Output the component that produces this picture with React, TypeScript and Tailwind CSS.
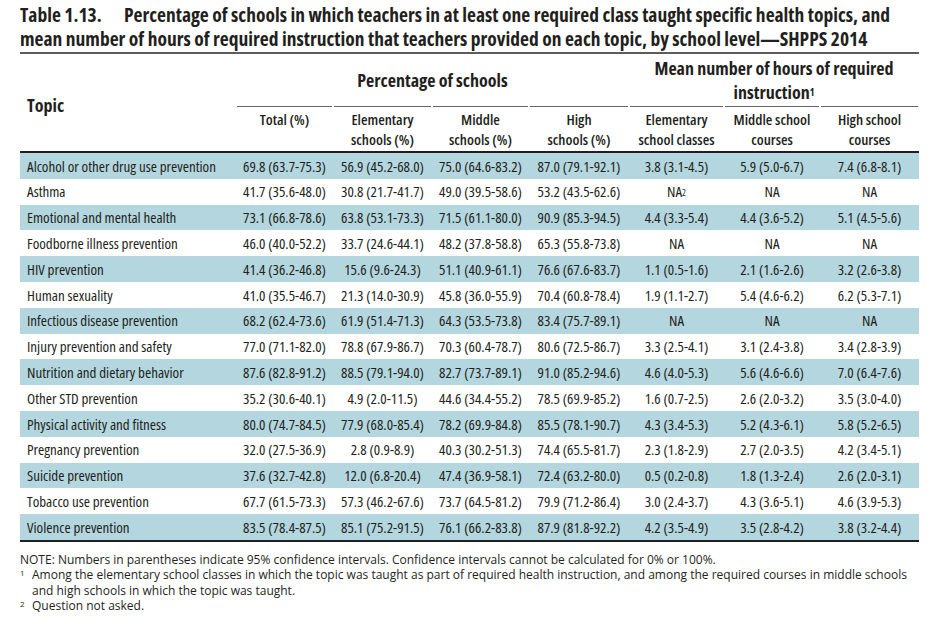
const rows: string[][] = [
  ['Alcohol or other drug use prevention', '69.8 (63.7-75.3)', '56.9 (45.2-68.0)', '75.0 (64.6-83.2)', '87.0 (79.1-92.1)', '3.8 (3.1-4.5)', '5.9 (5.0-6.7)', '7.4 (6.8-8.1)'],
  ['Asthma', '41.7 (35.6-48.0)', '30.8 (21.7-41.7)', '49.0 (39.5-58.6)', '53.2 (43.5-62.6)', 'NA*', 'NA', 'NA'],
  ['Emotional and mental health', '73.1 (66.8-78.6)', '63.8 (53.1-73.3)', '71.5 (61.1-80.0)', '90.9 (85.3-94.5)', '4.4 (3.3-5.4)', '4.4 (3.6-5.2)', '5.1 (4.5-5.6)'],
  ['Foodborne illness prevention', '46.0 (40.0-52.2)', '33.7 (24.6-44.1)', '48.2 (37.8-58.8)', '65.3 (55.8-73.8)', 'NA', 'NA', 'NA'],
  ['HIV prevention', '41.4 (36.2-46.8)', '15.6 (9.6-24.3)', '51.1 (40.9-61.1)', '76.6 (67.6-83.7)', '1.1 (0.5-1.6)', '2.1 (1.6-2.6)', '3.2 (2.6-3.8)'],
  ['Human sexuality', '41.0 (35.5-46.7)', '21.3 (14.0-30.9)', '45.8 (36.0-55.9)', '70.4 (60.8-78.4)', '1.9 (1.1-2.7)', '5.4 (4.6-6.2)', '6.2 (5.3-7.1)'],
  ['Infectious disease prevention', '68.2 (62.4-73.6)', '61.9 (51.4-71.3)', '64.3 (53.5-73.8)', '83.4 (75.7-89.1)', 'NA', 'NA', 'NA'],
  ['Injury prevention and safety', '77.0 (71.1-82.0)', '78.8 (67.9-86.7)', '70.3 (60.4-78.7)', '80.6 (72.5-86.7)', '3.3 (2.5-4.1)', '3.1 (2.4-3.8)', '3.4 (2.8-3.9)'],
  ['Nutrition and dietary behavior', '87.6 (82.8-91.2)', '88.5 (79.1-94.0)', '82.7 (73.7-89.1)', '91.0 (85.2-94.6)', '4.6 (4.0-5.3)', '5.6 (4.6-6.6)', '7.0 (6.4-7.6)'],
  ['Other STD prevention', '35.2 (30.6-40.1)', '4.9 (2.0-11.5)', '44.6 (34.4-55.2)', '78.5 (69.9-85.2)', '1.6 (0.7-2.5)', '2.6 (2.0-3.2)', '3.5 (3.0-4.0)'],
  ['Physical activity and fitness', '80.0 (74.7-84.5)', '77.9 (68.0-85.4)', '78.2 (69.9-84.8)', '85.5 (78.1-90.7)', '4.3 (3.4-5.3)', '5.2 (4.3-6.1)', '5.8 (5.2-6.5)'],
  ['Pregnancy prevention', '32.0 (27.5-36.9)', '2.8 (0.9-8.9)', '40.3 (30.2-51.3)', '74.4 (65.5-81.7)', '2.3 (1.8-2.9)', '2.7 (2.0-3.5)', '4.2 (3.4-5.1)'],
  ['Suicide prevention', '37.6 (32.7-42.8)', '12.0 (6.8-20.4)', '47.4 (36.9-58.1)', '72.4 (63.2-80.0)', '0.5 (0.2-0.8)', '1.8 (1.3-2.4)', '2.6 (2.0-3.1)'],
  ['Tobacco use prevention', '67.7 (61.5-73.3)', '57.3 (46.2-67.6)', '73.7 (64.5-81.2)', '79.9 (71.2-86.4)', '3.0 (2.4-3.7)', '4.3 (3.6-5.1)', '4.6 (3.9-5.3)'],
  ['Violence prevention', '83.5 (78.4-87.5)', '85.1 (75.2-91.5)', '76.1 (66.2-83.8)', '87.9 (81.8-92.2)', '4.2 (3.5-4.9)', '3.5 (2.8-4.2)', '3.8 (3.2-4.4)'],
]

const subHeads = [
  ['Total (%)'],
  ['Elementary', 'schools (%)'],
  ['Middle', 'schools (%)'],
  ['High', 'schools (%)'],
  ['Elementary', 'school classes'],
  ['Middle school', 'courses'],
  ['High school', 'courses'],
]

const cols = 'grid grid-cols-[216px_97px_99px_97px_100px_95px_96px_99px]'

const Cell = ({ value }: { value: string }) => {
  if (value === 'NA*') {
    return (
      <span>
        NA<sup className="text-[9px] relative -top-[1px]">2</sup>
      </span>
    )
  }
  return <span>{value}</span>
}

export default function App() {
  return (
    <div className="w-[944px] h-[624px] bg-white text-[#231f20] pl-[20px] pr-[25px] font-['Open_Sans',sans-serif] overflow-hidden">
      <div className="font-stretch-condensed">
        {/* title */}
        <div className="pt-[3px] h-[52px] text-[19.5px] leading-[23.5px] font-bold whitespace-nowrap">
          <span className="inline-block w-[104px]">Table 1.13.</span>
          Percentage of schools in which teachers in at least one required class taught specific health topics, and
          <br />
          mean number of hours of required instruction that teachers provided on each topic, by school level—SHPPS 2014
        </div>
        <div className="h-[2px] bg-[#5c5c5c]" />

        {/* header */}
        <div className={cols}>
          <div className="row-span-3 flex items-center pl-[7px] pt-[6px] text-[18px] font-bold">Topic</div>
          <div className="col-span-4 h-[52px] flex items-center justify-center text-[18px] font-bold">
            Percentage of schools
          </div>
          <div className="col-span-3 h-[52px] flex flex-col items-center justify-center text-[18px] leading-[24px] font-bold">
            <span>Mean number of hours of required</span>
            <span>
              instruction<sup className="text-[10px] relative -top-[3px]">1</sup>
            </span>
          </div>
          {subHeads.map((_, i) => (
            <div key={'l' + i} className="h-[1px] mx-[1px] bg-[#666]" />
          ))}
          {subHeads.map((lines, i) => (
            <div key={'h' + i} className="h-[44px] pt-[2px] flex flex-col items-center text-[15px] leading-[20px] font-semibold">
              {lines.map((l) => (
                <span key={l}>{l}</span>
              ))}
            </div>
          ))}
        </div>
        <div className="h-[2px] bg-[#231f20]" />

        {/* body */}
        <div className="text-[15px]">
          {rows.map((r, i) => (
            <div key={r[0]} className={`${cols} h-[25.8px] items-center ${i % 2 === 0 ? 'bg-[#b3d6df]' : 'bg-white'}`}>
              <div className="pl-[7px] whitespace-nowrap">{r[0]}</div>
              {r.slice(1).map((v, j) => (
                <div key={j} className="text-center whitespace-nowrap">
                  <Cell value={v} />
                </div>
              ))}
            </div>
          ))}
        </div>
        <div className="h-[2px] bg-[#231f20]" />
      </div>

      {/* notes */}
      <div className="pt-[10px] text-[12px] leading-[15.5px]">
        <div>NOTE: Numbers in parentheses indicate 95% confidence intervals. Confidence intervals cannot be calculated for 0% or 100%.</div>
        <div className="flex">
          <span className="w-[12px] shrink-0 text-[8px] leading-[12px]">1</span>
          <span>
            Among the elementary school classes in which the topic was taught as part of required health instruction, and among the required courses in middle schools
            <br />
            and high schools in which the topic was taught.
          </span>
        </div>
        <div className="flex">
          <span className="w-[12px] shrink-0 text-[8px] leading-[12px]">2</span>
          <span>Question not asked.</span>
        </div>
      </div>
    </div>
  )
}
